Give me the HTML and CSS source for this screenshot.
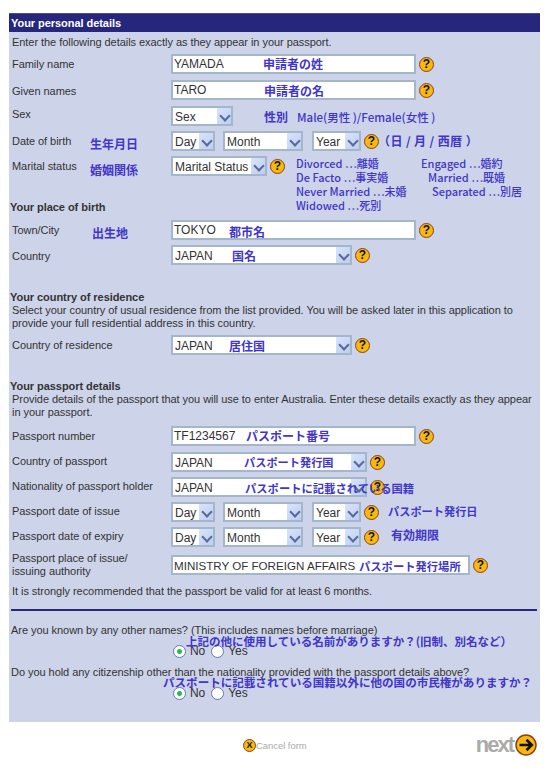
FILE: index.html
```html
<!DOCTYPE html>
<html lang="en">

<head>
    <meta charset="UTF-8">
    <meta name="viewport" content="width=device-width, initial-scale=1.0">
    <title>Your personal details</title>
    <link rel="stylesheet" href="styles.css">
</head>

<body>
    <form class="panel" action="">
        <h1 class="title">Your personal details</h1>
        <p class="intro">Enter the following details exactly as they appear in your passport.</p>

        <div class="row first">
            <label class="label">Family name</label>
            <input class="text w-name" type="text" value="YAMADA">
            <span class="help">?</span>
            <span class="note n-family">申請者の姓</span>
        </div>
        <div class="row">
            <label class="label low">Given names</label>
            <input class="text w-name" type="text" value="TARO">
            <span class="help">?</span>
            <span class="note n-given">申請者の名</span>
        </div>
        <div class="row">
            <label class="label up">Sex</label>
            <span class="select w-sex"><select><option>Sex</option></select><span class="arrow"></span></span>
            <span class="note n-sex">性別</span>
            <span class="note n-sex2">Male(男性 )/Female(女性 )</span>
        </div>
        <div class="row tight">
            <label class="label">Date of birth</label>
            <span class="select w-day"><select><option>Day</option></select><span class="arrow"></span></span>
            <span class="select w-month"><select><option>Month</option></select><span class="arrow"></span></span>
            <span class="select w-year"><select><option>Year</option></select><span class="arrow"></span></span>
            <span class="help">?</span>
            <span class="note n-dob">生年月日</span>
            <span class="note n-dob2">（日 / 月 / 西暦 ）</span>
        </div>
        <div class="row tight">
            <label class="label">Marital status</label>
            <span class="select w-marital"><select><option>Marital Status</option></select><span class="arrow"></span></span>
            <span class="help">?</span>
            <span class="note n-marital">婚姻関係</span>
            <div class="note marital-list">
                <span>Divorced ⋯離婚</span><span>Engaged ⋯婚約</span>
                <span>De Facto ⋯事実婚</span><span class="in1">Married ⋯既婚</span>
                <span>Never Married ⋯未婚</span><span class="in2">Separated ⋯別居</span>
                <span>Widowed ⋯死別</span>
            </div>
        </div>

        <h2 class="heading h-birth">Your place of birth</h2>
        <div class="row">
            <label class="label">Town/City</label>
            <input class="text w-name" type="text" value="TOKYO">
            <span class="help">?</span>
            <span class="note n-town">出生地</span>
            <span class="note n-town2">都市名</span>
        </div>
        <div class="row tight">
            <label class="label low">Country</label>
            <span class="select w-country"><select><option>JAPAN</option></select><span class="arrow"></span></span>
            <span class="help">?</span>
            <span class="note n-country">国名</span>
        </div>

        <h2 class="heading h-residence">Your country of residence</h2>
        <p class="para">Select your country of usual residence from the list provided. You will be asked later in this application to provide your full residential address in this country.</p>
        <div class="row tight">
            <label class="label">Country of residence</label>
            <span class="select w-country"><select><option>JAPAN</option></select><span class="arrow"></span></span>
            <span class="help">?</span>
            <span class="note n-residence">居住国</span>
        </div>

        <h2 class="heading">Your passport details</h2>
        <p class="para">Provide details of the passport that you will use to enter Australia. Enter these details exactly as they appear in your passport.</p>
        <div class="row after-heading">
            <label class="label">Passport number</label>
            <input class="text w-name" type="text" value="TF1234567">
            <span class="help">?</span>
            <span class="note n-number">パスポート番号</span>
        </div>
        <div class="row">
            <label class="label high">Country of passport</label>
            <span class="select w-passport"><select><option>JAPAN</option></select><span class="arrow"></span></span>
            <span class="help">?</span>
            <span class="note n-pcountry">パスポート発行国</span>
        </div>
        <div class="row tight">
            <label class="label high">Nationality of passport holder</label>
            <span class="select w-passport"><select><option>JAPAN</option></select><span class="arrow"></span></span>
            <span class="help">?</span>
            <span class="note n-nationality">パスポートに記載されている国籍</span>
        </div>
        <div class="row tight">
            <label class="label high">Passport date of issue</label>
            <span class="select w-day"><select><option>Day</option></select><span class="arrow"></span></span>
            <span class="select w-month"><select><option>Month</option></select><span class="arrow"></span></span>
            <span class="select w-year"><select><option>Year</option></select><span class="arrow"></span></span>
            <span class="help">?</span>
            <span class="note n-issue">パスポート発行日</span>
        </div>
        <div class="row tight">
            <label class="label high">Passport date of expiry</label>
            <span class="select w-day"><select><option>Day</option></select><span class="arrow"></span></span>
            <span class="select w-month"><select><option>Month</option></select><span class="arrow"></span></span>
            <span class="select w-year"><select><option>Year</option></select><span class="arrow"></span></span>
            <span class="help">?</span>
            <span class="note n-expiry">有効期限</span>
        </div>
        <div class="row place">
            <label class="label high">Passport place of issue/<br>issuing authority</label>
            <input class="text w-place" type="text" value="MINISTRY OF FOREIGN AFFAIRS">
            <span class="help">?</span>
            <span class="note n-place">パスポート発行場所</span>
        </div>
        <p class="valid">It is strongly recommended that the passport be valid for at least 6 months.</p>

        <hr class="rule">

        <div class="question q-first">
            <p class="ask">Are you known by any other names? (This includes names before marriage)</p>
            <span class="note n-q1">上記の他に使用している名前がありますか？(旧制、別名など）</span>
            <div class="radios">
                <input type="radio" name="other" checked><label>No</label>
                <input type="radio" name="other"><label>Yes</label>
            </div>
        </div>
        <div class="question">
            <p class="ask">Do you hold any citizenship other than the nationality provided with the passport details above?</p>
            <span class="note n-q2">パスポートに記載されている国籍以外に他の国の市民権がありますか？</span>
            <div class="radios">
                <input type="radio" name="citizen" checked><label>No</label>
                <input type="radio" name="citizen"><label>Yes</label>
            </div>
        </div>
    </form>

    <div class="footer">
        <a class="cancel"><span class="help small">X</span>Cancel form</a>
        <a class="next">next
            <svg class="next-icon" width="22" height="22" viewBox="0 0 22 22">
                <circle cx="11" cy="11" r="10" fill="#f7b90f" stroke="#8f3f12" stroke-width="1.5" />
                <path d="M4.5 11H16M11.5 5.8L16.8 11L11.5 16.2" fill="none" stroke="#111" stroke-width="2.6" />
            </svg>
        </a>
    </div>
</body>

</html>
```

FILE: styles.css
```css
* {
    box-sizing: border-box;
}

body {
    margin: 0;
    background-color: #fff;
    font-family: "Liberation Sans", Arial, sans-serif;
    font-size: 11px;
    letter-spacing: -0.05px;
    color: #333;
}

.panel {
    width: 531px;
    height: 709px;
    margin: 13px 0 0 9px;
    background-color: #cdd3e9;
}

.title {
    margin: 0;
    height: 19px;
    padding-left: 2px;
    background-color: #26267c;
    border-top: 1px solid #4a4a94;
    color: #fff;
    font-size: 11px;
    line-height: 19px;
}

.intro {
    margin: 0;
    padding: 3px 0 0 3px;
    line-height: 14px;
}

.row {
    position: relative;
    display: flex;
    align-items: center;
    height: 20px;
    margin-top: 6px;
    padding-left: 3px;
}

.row.first {
    margin-top: 5px;
}

.row.tight {
    margin-top: 5px;
}

.row.after-heading {
    margin-top: 7px;
}

.row.place {
    margin-top: 8px;
}

.label {
    flex: none;
    width: 159px;
    margin-top: 1px;
    line-height: 13px;
}

.label.low {
    margin-top: 3px;
}

.label.high {
    margin-top: -1px;
}

.label.up {
    margin-top: -4px;
}

.text {
    height: 20px;
    padding: 0 0 0 1px;
    border: 2px solid #a3b6ca;
    background-color: #fff;
    color: #333;
    font-family: "Liberation Sans", Arial, sans-serif;
    font-size: 12px;
    outline: none;
}

.w-name {
    width: 245px;
}

.w-place {
    width: 299px;
    font-size: 11.6px;
}

.select {
    position: relative;
    flex: none;
    display: block;
    height: 20px;
    margin-right: 8px;
    border: 2px solid #a3b6ca;
    background-color: #fff;
}

.select select {
    display: block;
    width: 100%;
    height: 16px;
    padding: 1px 0 0 2px;
    border: 0;
    background: transparent;
    color: #333;
    font-family: "Liberation Sans", Arial, sans-serif;
    font-size: 12px;
    appearance: none;
    outline: none;
}

.arrow {
    position: absolute;
    top: 0;
    right: 0;
    width: 14px;
    height: 16px;
    background: linear-gradient(135deg, #d9e4fa, #bccef2);
    pointer-events: none;
}

.arrow::after {
    content: "";
    position: absolute;
    top: 4px;
    left: 4px;
    width: 6px;
    height: 6px;
    border-right: 2px solid #5a6a98;
    border-bottom: 2px solid #5a6a98;
    transform: rotate(45deg);
}

.w-sex {
    width: 62px;
}

.w-day {
    width: 44px;
}

.w-month {
    width: 80px;
    margin-right: 9px;
}

.w-year {
    width: 49px;
    margin-right: 0;
}

.w-marital {
    width: 96px;
    margin-right: 0;
}

.w-country {
    width: 181px;
    margin-right: 0;
}

.w-passport {
    width: 196px;
    margin-right: 0;
}

.help {
    flex: none;
    width: 15px;
    height: 15px;
    margin-left: 3px;
    border: 1px solid #8f3f12;
    border-radius: 50%;
    background-color: #f7b90f;
    color: #111;
    font-size: 12px;
    font-weight: bold;
    line-height: 13px;
    text-align: center;
}

.heading {
    margin: 24px 0 0;
    padding-left: 1px;
    font-size: 11px;
    line-height: 14px;
}

.h-birth {
    margin-top: 24px;
}

.h-residence {
    margin-top: 25px;
}

.para {
    margin: 0;
    padding: 0 0 0 3px;
    line-height: 13px;
}

.valid {
    margin: 9px 0 0;
    padding-left: 3px;
    line-height: 14px;
}

.rule {
    height: 2px;
    margin: 11px 3px 0 2px;
    border: 0;
    background-color: #26267c;
}

.question {
    position: relative;
    height: 41px;
    padding-left: 2px;
}

.q-first {
    margin-top: 13px;
    margin-bottom: 1px;
}

.ask {
    margin: 0;
    line-height: 13px;
}

.radios {
    display: flex;
    align-items: center;
    height: 14px;
    margin-top: 7px;
    padding-left: 160px;
    font-size: 12px;
}

.radios input {
    width: 13px;
    height: 13px;
    margin: 0 4px 0 2px;
    border: 1px solid #5f7fa8;
    border-radius: 50%;
    background-color: #fff;
    appearance: none;
}

.radios input:checked {
    background: radial-gradient(circle, #2fb84a 0 2px, #fff 3px);
}

.radios label {
    margin-right: 4px;
}

/* blue japanese notes written over the form */
.note {
    position: absolute;
    color: #4136c8;
    font-family: "Noto Sans CJK JP", sans-serif;
    font-size: 12px;
    font-weight: 700;
    letter-spacing: 0;
    line-height: 14px;
    white-space: nowrap;
}

.n-family { left: 254px; top: 3px; }
.n-given { left: 255px; top: 4px; }
.n-sex { left: 255px; top: 4px; }
.n-sex2 { left: 288px; top: 4px; font-size: 11.5px; font-weight: 500; }
.n-dob { left: 81px; top: 6px; }
.n-dob2 { left: 369px; top: 3px; letter-spacing: 0.4px; }
.n-marital { left: 81px; top: 7px; }
.n-town { left: 83px; top: 6px; }
.n-town2 { left: 220px; top: 5px; }
.n-country { left: 223px; top: 4px; }
.n-residence { left: 220px; top: 4px; }
.n-number { left: 237px; top: 3px; }
.n-pcountry { left: 235px; top: 3px; font-size: 11.2px; }
.n-nationality { left: 236px; top: 4px; font-size: 11.3px; }
.n-issue { left: 379px; top: 2px; font-size: 11.2px; }
.n-expiry { left: 382px; top: 1px; }
.n-place { left: 350px; top: 4px; font-size: 11.3px; }
.n-q1 { left: 177px; top: 10px; font-size: 11.5px; }
.n-q2 { left: 154px; top: 9px; font-size: 11.55px; }

.marital-list {
    left: 287px;
    top: 0;
    display: grid;
    grid-template-columns: 125px auto;
    font-size: 11px;
    font-weight: 500;
    line-height: 14px;
}

.marital-list .in1 {
    margin-left: 7px;
}

.marital-list .in2 {
    margin-left: 11px;
}

.footer {
    display: flex;
    align-items: center;
    justify-content: space-between;
    height: 22px;
    margin-top: 12px;
    padding: 0 13px 0 243px;
}

.cancel {
    display: flex;
    align-items: center;
    color: #aaa;
    font-size: 9.5px;
}

.help.small {
    width: 13px;
    height: 13px;
    margin: 0;
    font-size: 9px;
    line-height: 11px;
}

.next {
    display: flex;
    align-items: center;
    color: #aaa;
    font-size: 22px;
    font-weight: bold;
    letter-spacing: -2px;
}

.next-icon {
    flex: none;
    margin-left: 2px;
}
```
